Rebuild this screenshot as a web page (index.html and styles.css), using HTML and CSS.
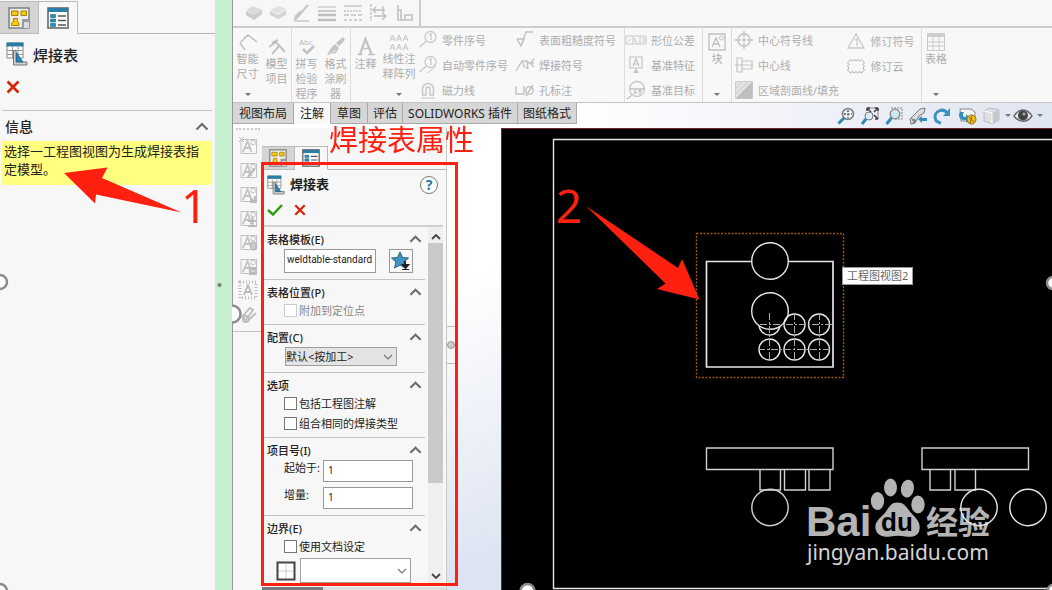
FILE: index.html
```html
<!DOCTYPE html>
<html lang="zh-CN">
<head>
<meta charset="utf-8">
<title>焊接表属性</title>
<link rel="stylesheet" href="styles.css">
</head>
<body>
<svg class="defs" aria-hidden="true">
  <symbol id="i-tree" viewBox="0 0 22 22">
    <rect x="1" y="1" width="20" height="20" fill="#ececec" stroke="#7b7b7b" stroke-width="1.4"/>
    <path d="M3.500 4h6.500v4.500h-6.500z M13 4h5.500v4.500h-5.500z M5.500 11.500h4v3l1.500 1.500v2.500h-7.500v-2.500l2-1.500z" fill="#f6c915" stroke="#a98400"/>
    <path d="M14 12h7v9h-7z" fill="#9b9b9b"/><path d="M16 15h5v6h-5z" fill="#ddd"/>
  </symbol>
  <symbol id="i-props" viewBox="0 0 22 22">
    <rect x="1" y="1" width="20" height="20" fill="#fff" stroke="#686868" stroke-width="1.600"/>
    <path d="M1 1h20v4h-20z" fill="#2b7da5"/>
    <path d="M3.500 7.500h5v3h-5z M3.500 12h5v3h-5z M3.500 16.500h5v3h-5z" fill="#2b8fc0" stroke="#1c5d80" stroke-width=".6"/>
    <path d="M11 9h8M11 13.500h8M11 18h8" stroke="#555" stroke-width="1.400"/>
  </symbol>
  <symbol id="i-weld" viewBox="0 0 22 24">
    <path d="M1 1h16v15h-16z" fill="#fff" stroke="#888"/>
    <path d="M.5 .5h17v4h-17z" fill="#2b7da5"/>
    <path d="M6.500 5v11M12 5v11M1 8.500h16M1 12.500h16" stroke="#999"/>
    <path d="M7.500 8.500h2.500v11.500h11v3h-13.500z" fill="#d0d0d0" stroke="#777"/>
    <path d="M10.500 10.500l6.500 9.500h-6.500z" fill="#2387bd" stroke="#175b80" stroke-width=".7"/>
  </symbol>
  <symbol id="i-x" viewBox="0 0 14 14"><path d="M1.500 1.500l11 11M12.500 1.500l-11 11" stroke="#d8220c" stroke-width="2.600" fill="none"/></symbol>
  <symbol id="i-up" viewBox="0 0 14 8"><path d="M1.500 7l5.500-5.500 5.500 5.500" stroke="#6c6c6c" stroke-width="2.200" fill="none"/></symbol>
  <symbol id="i-down" viewBox="0 0 10 6"><path d="M1 1l4 4 4-4" stroke="#777" stroke-width="1.200" fill="none"/></symbol>
  <symbol id="i-note" viewBox="0 0 20 20"><g fill="none" stroke="#c2c2c2"><path d="M3 3.500h15.500v14h-15.500z"/><circle cx="15" cy="6.500" r="2.400"/><path d="M5 16l4.500-11 4 11M6.500 12h5.500" stroke-width="1.800"/></g></symbol>
  <symbol id="i-balloon" viewBox="0 0 20 20"><g fill="none" stroke="#bdbdbd" stroke-width="1.300"><circle cx="12.500" cy="7" r="5.500"/><path d="M8.500 11l-7 6M11 5l2-1v6"/></g></symbol>
</svg>

<div class="app">
  <aside class="info-panel">
    <div class="ptabs big">
      <button class="ptab" aria-label="特征树"><svg width="22" height="22"><use href="#i-tree"/></svg></button>
      <button class="ptab on" aria-label="属性"><svg width="22" height="22"><use href="#i-props"/></svg></button>
    </div>
    <h1 class="info-title"><svg width="22" height="24"><use href="#i-weld"/></svg>焊接表</h1>
    <button class="info-close" aria-label="取消"><svg width="14" height="14"><use href="#i-x"/></svg></button>
    <section class="info-msg">
      <h2>信息<svg width="14" height="9"><use href="#i-up"/></svg></h2>
      <p>选择一工程图视图为生成焊接表指定模型。</p>
    </section>
  </aside>
  <div class="band"></div>

  <main class="cad">
    <div class="quickbar">
      <div class="quick">
        <svg width="18" height="20" viewBox="0 0 18 20"><path d="M1 7l7-4 9 4-8 5z" fill="#d6d6d6"/><path d="M1 8v4l8 5v-5zM17 7v4l-8 6v-5z" fill="#c2c2c2"/></svg>
        <svg width="18" height="20" viewBox="0 0 18 20"><path d="M1 7l8-4 8 3-8 5z" fill="#ddd"/><path d="M1 8v4l8 4v-4zM17 7v5l-8 4v-4z" fill="#ccc"/></svg>
        <svg width="18" height="20" viewBox="0 0 18 20"><path d="M15 2l-8 9M9 9l-5 6-2 1 1-3 4-4z" stroke="#bbb" stroke-width="2" fill="#bbb"/><path d="M2 18h14" stroke="#bbb" stroke-width="1.500"/></svg>
        <svg width="20" height="20" viewBox="0 0 20 20"><path d="M1 4h18" stroke="#aaa"/><path d="M1 8h18" stroke="#aaa" stroke-width="1.500"/><path d="M1 12h18M1 17h18" stroke="#b0b0b0" stroke-width="2.600"/></svg>
        <svg width="20" height="20" viewBox="0 0 20 20"><g stroke="#b8b8b8" stroke-width="1.400"><path d="M1 3h18"/><path d="M1 8h18" stroke-dasharray="2 1"/><path d="M1 12h18" stroke-dasharray="5 2"/><path d="M1 17h18" stroke-dasharray="3 2"/></g></svg>
        <svg width="20" height="20" viewBox="0 0 20 20"><g stroke="#b0b0b0" stroke-width="1.300" fill="none"><path d="M2 1v17" stroke-dasharray="3 1"/><path d="M4 7h12M7 4l-3 3 3 3M5 13h12M13 10l4 3-4 4M14 3v8"/></g></svg>
        <svg width="20" height="20" viewBox="0 0 20 20"><path d="M3 2v15h14v-5h-7v5M3 7h3v10" stroke="#b5b5b5" stroke-width="1.600" fill="none"/></svg>
      </div>
    </div>

    <nav class="ribbon" aria-label="注解工具">
      <div class="rgroup">
        <button class="rbig drop" disabled><svg width="20" height="18" viewBox="0 0 20 18"><path d="M2 10l8-8 9 7M2 10l5 7M6 5l5-3" stroke="#b5b5b5" stroke-width="1.500" fill="none"/></svg><span>智能<br>尺寸</span><i></i></button>
        <button class="rbig" disabled><svg width="20" height="20" viewBox="0 0 20 20"><path d="M5 7l6-3M2 11l7-5 9 10M5 18l7-8" stroke="#b5b5b5" stroke-width="2" fill="none"/></svg><span>模型<br>项目</span></button>
      </div>
      <div class="rgroup">
        <button class="rbig" disabled><svg width="20" height="20" viewBox="0 0 20 20"><text x="2" y="9" class="abc">Abc</text><path d="M6 13l4 4 7-7" stroke="#b5b5b5" stroke-width="2.600" fill="none"/></svg><span>拼写<br>检验<br>程序</span></button>
        <button class="rbig" disabled><svg width="20" height="20" viewBox="0 0 20 20"><path d="M17 1l2 3-6 6-3-3zM9 8l4 4-3 5-9 2 4-7z" fill="#b8b8b8"/><path d="M10 14l-6 4" stroke="#eee"/></svg><span>格式<br>涂刷<br>器</span></button>
      </div>
      <div class="rgroup wide">
        <button class="rbig" disabled><svg width="20" height="20" viewBox="0 0 20 20"><path d="M4 18l5.500-15 6 15" stroke="#b5b5b5" stroke-width="2.200" fill="none"/><path d="M6 12.500h7M1.500 18.500h5M12 18.500h7" stroke="#b5b5b5" stroke-width="1.400" fill="none"/></svg><span>注释</span></button>
        <button class="rbig pattern drop" disabled><svg width="22" height="18" viewBox="0 0 22 18"><path d="M2 8l2.500-6 2.500 6M8.500 8l2.500-6 2.500 6M15 8l2.500-6 2.500 6M2 17l2.500-6 2.500 6M8.500 17l2.500-6 2.500 6M15 17l2.500-6 2.500 6M3 6h3M9.500 6h3M16 6h3M3 15h3M9.500 15h3M16 15h3" stroke="#b8b8b8" fill="none"/></svg><span>线性注<br>释阵列</span><i></i></button>
        <div class="rlist balloons">
          <button disabled><svg width="20" height="20"><use href="#i-balloon"/></svg>零件序号</button>
          <button disabled><svg width="20" height="20" viewBox="0 0 20 20"><use href="#i-balloon"/><path d="M9 18l7-5 2-4" stroke="#bdbdbd" fill="none"/></svg>自动零件序号</button>
          <button disabled><svg width="20" height="20" viewBox="0 0 20 20"><path d="M4.500 15v-6a5.500 5.500 0 0111 0v6h-3.500v-6a2 2 0 00-4 0v6z" fill="none" stroke="#bdbdbd" stroke-width="1.500"/><path d="M3 18h14" stroke="#bdbdbd"/></svg>磁力线</button>
        </div>
        <div class="rlist">
          <button disabled><svg width="20" height="20" viewBox="0 0 20 20"><path d="M2 9h7l-3 7-4-7M6 16l5-14h7" stroke="#b5b5b5" stroke-width="1.400" fill="none"/></svg>表面粗糙度符号</button>
          <button disabled><svg width="20" height="20" viewBox="0 0 20 20"><path d="M1 16l6-10h5l1 8M7 6l3 7M13 6l-1 8M12 8h7M15 8l4 4M15 8l4-4" stroke="#b5b5b5" stroke-width="1.300" fill="none"/></svg>焊接符号</button>
          <button disabled><svg width="20" height="20" viewBox="0 0 20 20"><path d="M1 6v8h8v-8M18 5l-7 11" stroke="#b5b5b5" stroke-width="1.400" fill="none"/><circle cx="14.500" cy="10.500" r="3.800" fill="none" stroke="#b5b5b5" stroke-width="1.400"/></svg>孔标注</button>
        </div>
      </div>
      <div class="rgroup">
        <div class="rlist">
          <button disabled><svg width="22" height="20" viewBox="0 0 22 20"><path d="M1 6h20v8h-20zM8 6v8M15 6v8M3 11l3-2M10 8v4h3M17 8h2v4h-2" stroke="#bdbdbd" fill="none"/></svg>形位公差</button>
          <button disabled><svg width="22" height="20" viewBox="0 0 22 20"><path d="M5 2h12v11h-12zM11 13v5M8 11l3-7 3 7M9 9h4" stroke="#b5b5b5" stroke-width="1.200" fill="none"/><path d="M8 18h6l-3-4z" fill="#b5b5b5"/></svg>基准特征</button>
          <button disabled><svg width="22" height="20" viewBox="0 0 22 20"><circle cx="12" cy="9" r="7.500" fill="none" stroke="#bdbdbd" stroke-width="1.300"/><path d="M4 9h16M7 15l-5 4M9 14l1-3 2 3M13 11h4M15 11v4" stroke="#b5b5b5" stroke-width="1.300" fill="none"/></svg>基准目标</button>
        </div>
      </div>
      <div class="rgroup">
        <button class="rbig single drop" disabled><svg width="18" height="18" viewBox="0 0 18 18"><path d="M1 1h16v16h-16zM4 14l4-9 4 9M5 11h6" stroke="#b5b5b5" stroke-width="1.400" fill="none"/><circle cx="13.500" cy="5" r="2" fill="none" stroke="#b5b5b5"/></svg><span>块</span><i></i></button>
      </div>
      <div class="rgroup last-lists">
        <div class="rlist centers">
          <button disabled><svg width="20" height="20" viewBox="0 0 20 20"><circle cx="10" cy="10" r="6" fill="none" stroke="#b5b5b5" stroke-width="1.300"/><path d="M10 1v6M10 13v6M1 10h6M13 10h6M8 10h4M10 8v4" stroke="#b5b5b5" stroke-width="1.300"/></svg>中心符号线</button>
          <button disabled><svg width="20" height="20" viewBox="0 0 20 20"><path d="M3 3h5v14h-5zM8 6h10v8h-10M1 10h18" stroke="#b8b8b8" stroke-width="1.200" fill="none"/></svg>中心线</button>
          <button disabled><svg width="20" height="20" viewBox="0 0 20 20"><path d="M1.500 1.500h17v17h-17z" fill="#dedede" stroke="#c4c4c4"/><path d="M18.500 1.500v17h-17z" fill="#b0b0b0"/><path d="M2 8l6-6M2 14l12-12" stroke="#c2c2c2"/></svg>区域剖面线/填充</button>
        </div>
        <div class="rlist">
          <button disabled><svg width="20" height="20" viewBox="0 0 20 20"><path d="M10 3l8 14h-16zM9 9l2-1v7" stroke="#bdbdbd" stroke-width="1.300" fill="none"/></svg>修订符号</button>
          <button disabled><svg width="20" height="20" viewBox="0 0 20 20"><path d="M3 5q2-3 3.500 0q2-3 3.500 0q2-3 3.500 0q2-3 3.500 0q3 2 0 3.500q3 2 0 3.500q3 2 0 3.500q-2 3-3.500 0q-2 3-3.500 0q-2 3-3.500 0q-2 3-3.500 0q-3-2 0-3.500q-3-2 0-3.500q-3-2 0-3.500z" stroke="#999" fill="none"/></svg>修订云</button>
        </div>
      </div>
      <div class="rgroup">
        <button class="rbig single drop" disabled><svg width="18" height="18" viewBox="0 0 18 18"><path d="M.5 .5h17v17h-17zM.5 9h17M.5 13h17M6 4v13M12 4v13" stroke="#bdbdbd" fill="none"/><path d="M0 0h18v4h-18z" fill="#c4c4c4"/></svg><span>表格</span><i></i></button>
      </div>
    </nav>

    <div class="tabrow">
      <div class="tabs" role="tablist">
        <button role="tab">视图布局</button><button role="tab" class="on" aria-selected="true">注解</button><button role="tab">草图</button><button role="tab">评估</button><button role="tab">SOLIDWORKS 插件</button><button role="tab">图纸格式</button>
      </div>
      <div class="viewbar">
        <svg width="18" height="18" viewBox="0 0 18 18"><circle cx="11" cy="7" r="5.500" fill="#eef4f8" stroke="#7c7c7c" stroke-width="1.500"/><path d="M11 3v8M7 7h8" stroke="#555" stroke-dasharray="2 1.500" stroke-width="1.600"/><path d="M7 11l-5.500 5.500" stroke="#3288b4" stroke-width="3"/></svg>
        <svg width="18" height="18" viewBox="0 0 18 18"><path d="M6 1h11v11" fill="none" stroke="#888"/><path d="M6 1l4 4M17 1l-4 4M17 12l-4-4M6 1h3M6 1v3M17 1v3M17 1h-3M17 12h-3" stroke="#444" stroke-width="1.600"/><circle cx="8" cy="9" r="4" fill="#dceef8" stroke="#777"/><path d="M5 12l-4 5" stroke="#3288b4" stroke-width="3"/></svg>
        <svg width="18" height="18" viewBox="0 0 18 18"><path d="M6 1h11v11h-8" fill="none" stroke="#888" stroke-dasharray="2 1"/><circle cx="10" cy="7" r="4.800" fill="#cfe7f3" stroke="#888" stroke-width="1.300"/><path d="M6.500 11l-5 6" stroke="#3288b4" stroke-width="3"/></svg>
        <svg width="18" height="18" viewBox="0 0 18 18"><path d="M1 12l10-10 5-1-1 5-5 3-4 7-4 1z" fill="#ddd" stroke="#777"/><path d="M2 11l6 2-3 4z" fill="#888"/><path d="M9 12l4-3v2h5v3h-5v2z" fill="#2e8bba"/></svg>
        <svg width="18" height="18" viewBox="0 0 18 18"><path d="M8 16c-7-1-8-9-2-12 4-2 7 0 9 3" stroke="#3c91bd" stroke-width="3" fill="none"/><path d="M17 1v8h-7z" fill="#3c91bd"/></svg>
        <svg width="20" height="18" viewBox="0 0 20 18"><path d="M3 2h11l4 3v9h-14z" fill="#f4f4f4" stroke="#888"/><path d="M3 5c-3 5 1 9 6 8v3l4-5-4-4v3c-3 0-4-2-2-5z" fill="#3590bf"/><circle cx="14.500" cy="12.500" r="4.500" fill="#f0bc25" stroke="#936c00"/><path d="M12 10l5 5M15 9l-2 7" stroke="#936c00"/></svg>
        <svg width="17" height="18" viewBox="0 0 17 18"><path d="M1 4l6-3 9 2v10l-7 4-8-3z" fill="#dfdfe3" stroke="#bbb"/><path d="M9 6v11l7-4v-10z" fill="#c5c8ce"/><path d="M1 4l8 2v11" fill="none" stroke="#fff"/></svg>
        <b class="tri cube-menu"></b>
        <svg width="20" height="18" viewBox="0 0 20 18"><path d="M1 9c5-8 13-8 18 0-5 7-13 7-18 0z" fill="#e8e8e8" stroke="#666" stroke-width="1.400"/><circle cx="10" cy="8.500" r="5" fill="#444"/><circle cx="11" cy="7" r="1.500" fill="#aaa"/></svg>
        <b class="tri eye-menu"></b>
      </div>
    </div>

    <div class="work">
      <div class="sidebar">
        <div class="sidetools">
          <svg width="20" height="20" viewBox="0 0 20 20"><use href="#i-note"/><path d="M1 1l5 5M6 1l-5 5" stroke="#bbb"/></svg>
          <svg width="20" height="20" viewBox="0 0 20 20"><use href="#i-note"/><path d="M18 9l-7 8-2 1 1-3 6-7z" fill="#bbb"/></svg>
          <svg width="20" height="20" viewBox="0 0 20 20"><use href="#i-note"/><path d="M12 12l4 4v-4h3v7h-7z" fill="#bbb"/></svg>
          <svg width="20" height="20" viewBox="0 0 20 20"><use href="#i-note"/><path d="M10 13h9M14.500 9v8M10 18h9" stroke="#bbb" stroke-width="2"/></svg>
          <svg width="20" height="20" viewBox="0 0 20 20"><use href="#i-note"/><rect x="13" y="10" width="5" height="8" rx="2" fill="#ccc" stroke="#aaa"/></svg>
          <svg width="20" height="20" viewBox="0 0 20 20"><use href="#i-note"/><path d="M11 11h8v8h-8z" fill="#bbb"/><path d="M13 15h4" stroke="#eee"/></svg>
          <svg width="20" height="20" viewBox="0 0 20 20"><path d="M2 2h16v16h-16z" stroke="#bbb" stroke-width="3" stroke-dasharray="1 2" fill="none"/><path d="M6 15l4-10 4 10M7 12h6" stroke="#bbb" stroke-width="1.800" fill="none"/></svg>
          <svg width="20" height="20" viewBox="0 0 20 20"><g stroke="#bbb" stroke-width="1.800" fill="none"><path d="M4 13l8-9 3 2-7 10zM12 15l6-6"/><circle cx="8" cy="15" r="3"/></g></svg>
        </div>
      </div>

      <div class="prop">
        <div class="ptabs">
          <button class="ptab" aria-label="特征树"><svg width="18" height="18"><use href="#i-tree"/></svg></button>
          <button class="ptab on" aria-label="属性"><svg width="18" height="18"><use href="#i-props"/></svg></button>
        </div>
        <div class="prop-head">
          <svg width="18" height="20"><use href="#i-weld"/></svg><h2>焊接表</h2>
          <button class="help" aria-label="帮助">?</button>
        </div>
        <div class="prop-actions">
          <button aria-label="确定"><svg width="16" height="12" viewBox="0 0 16 12"><path d="M1 6l5 4.500 9-9.500" stroke="#2f9a10" stroke-width="2.400" fill="none"/></svg></button>
          <button aria-label="取消"><svg width="12" height="12"><use href="#i-x"/></svg></button>
        </div>
        <div class="scroller">
          <form class="sections">
            <section>
              <h3>表格模板(E)<svg width="13" height="8"><use href="#i-up"/></svg></h3>
              <div class="row tmpl"><input type="text" class="file" aria-label="表格模板" value="weldtable-standard">
                <button type="button" class="star" aria-label="打开模板"><svg width="20" height="20" viewBox="0 0 20 20"><path d="M9 1l2.500 5.500 6 .5-4.500 4 1.500 6-5.500-3-5.500 3 1.500-6-4.500-4 6-.5z" fill="#3e95c1" stroke="#27627f"/><path d="M14 10v4M12 14h5l-2.500 3z" stroke="#222" stroke-width="2" fill="#222"/><path d="M11 18.500h7" stroke="#222"/></svg></button></div>
            </section>
            <section>
              <h3>表格位置(P)<svg width="13" height="8"><use href="#i-up"/></svg></h3>
              <label class="check off"><input type="checkbox" disabled>附加到定位点</label>
            </section>
            <section>
              <h3>配置(C)<svg width="13" height="8"><use href="#i-up"/></svg></h3>
              <div class="combo config"><select aria-label="配置"><option>默认&lt;按加工&gt;</option></select><svg width="10" height="6"><use href="#i-down"/></svg></div>
            </section>
            <section>
              <h3>选项<svg width="13" height="8"><use href="#i-up"/></svg></h3>
              <label class="check"><input type="checkbox">包括工程图注解</label>
              <label class="check"><input type="checkbox">组合相同的焊接类型</label>
            </section>
            <section>
              <h3>项目号(I)<svg width="13" height="8"><use href="#i-up"/></svg></h3>
              <div class="row num"><label for="start">起始于:</label><input type="text" id="start" value="1"></div>
              <div class="row num"><label for="step">增量:</label><input type="text" id="step" value="1"></div>
            </section>
            <section>
              <h3>边界(E)<svg width="13" height="8"><use href="#i-up"/></svg></h3>
              <label class="check"><input type="checkbox">使用文档设定</label>
              <div class="row border-row"><svg width="20" height="20" viewBox="0 0 20 20"><path d="M1.500 1.500h17v17h-17z" fill="#fff" stroke="#444" stroke-width="2"/><path d="M10 3v14M3 10h14" stroke="#ccc"/></svg>
                <div class="combo line"><select aria-label="边界线宽"><option></option></select><svg width="10" height="6"><use href="#i-down"/></svg></div></div>
            </section>
          </form>
          <div class="scrollbar"><svg width="10" height="6" viewBox="0 0 10 6"><path d="M1 5l4-4 4 4" stroke="#444" stroke-width="1.800" fill="none"/></svg><div class="thumb"></div><svg width="10" height="6" viewBox="0 0 10 6"><path d="M1 1l4 4 4-4" stroke="#444" stroke-width="1.800" fill="none"/></svg></div>
        </div>
        <div class="bottom-edge"></div>
      </div>
      <div class="splitter"><span></span></div>

      <div class="sheet">
        <svg class="drawing" width="100%" height="100%">
          <g transform="translate(-502 -129)" fill="none" stroke="#e6e6e6" stroke-width="1.400">
            <path d="M4000 139.500H553.500V588.500H4000"/>
            <path d="M696.500 233.500h147v144h-147z" stroke="#9a5a10" stroke-dasharray="2 1.500"/>
            <path d="M706.500 261.500h126.500v105.500h-126.500z" stroke-width="1.700"/>
            <circle cx="770" cy="261" r="18.300" fill="#000"/>
            <circle cx="769.500" cy="324.500" r="10.500"/>
            <circle cx="770" cy="311" r="18.300" fill="#000"/>
            <g><circle cx="794.500" cy="324.500" r="10.500"/><circle cx="819" cy="324.500" r="10.500"/><circle cx="769.500" cy="349.500" r="10.500"/><circle cx="794.500" cy="349.500" r="10.500"/><circle cx="819" cy="349.500" r="10.500"/></g>
            <path d="M760 324.500h72M758 349.500h74M769.500 313v48M794.500 313v48M819.500 313v48" stroke="#aaa" stroke-width="1" stroke-dasharray="7 2 2 2"/>
            <g stroke="#d0d0d0">
              <path d="M706.500 448h126.500v21.500h-126.500zM760 469.500v20.500h20.500v-20.500M784.500 469.500v20.500h21v-20.500M809 469.500v20.500h21v-20.500M922 448h106.500v21.500h-106.500zM930 469.500v20.500h20.500v-20.500M955 469.500v20.500h20.500v-20.500"/>
              <circle cx="770" cy="507.500" r="18.200"/>
            </g>
            <g fill="#b4b4b4" stroke="none">
              <text x="806" y="536" class="bai">Bai</text>
              <ellipse cx="877.500" cy="501" rx="6.700" ry="9"/><ellipse cx="890.500" cy="487.500" rx="6.500" ry="9"/><ellipse cx="907.500" cy="488.500" rx="6.500" ry="9" transform="rotate(10 907 488)"/><ellipse cx="918" cy="504.500" rx="6.700" ry="9"/>
              <path d="M897.500 502.500c8 0 10 7 15 12s8 9 7 15c-1 7-8 8-14 7-5-1-10-1-15 0-7 1-14-1-15-8-1-6 3-9 8-14s6-12 14-12z"/>
              <text x="881" y="531" class="du">du</text>
              <text x="926" y="534" class="jy">经验</text>
              <text x="807" y="560" class="url">jingyan.baidu.com</text>
            </g>
            <circle cx="979" cy="507.500" r="18.200"/><circle cx="1028" cy="507.500" r="18.200"/>
          </g>
        </svg>
        <div class="tip">工程图视图2</div>
      </div>
    </div>
  </main>
</div>

<svg class="notes" width="100%" height="100%">
  <g fill="#fff" stroke="#8c8c8c" stroke-width="2.500">
    <circle cx="0" cy="282" r="7"/><circle cx="0" cy="591" r="7"/><path d="M232 305.500a8.500 8.500 0 010 17"/><circle cx="527.500" cy="591" r="7"/><circle cx="1053" cy="283" r="6"/><circle cx="1053" cy="590" r="5"/>
  </g>
  <circle cx="219.500" cy="285" r="2" fill="#777"/>
  <path d="M262.500 163.500h194v421h-194z" fill="none" stroke="#ff2010" stroke-width="3"/>
  <path d="M64 173l43.500-5.500-5.500 10.500 79.500 34.500-85.500-18-1 9z" fill="#ff2010"/>
  <path d="M586 206l92 62 4-9 17.500 40.500-42.500-10.500 8.500-5.500z" fill="#ff2010"/>
  <text x="329" y="151" class="red-label">焊接表属性</text>
  <text x="181" y="223" class="red-num">1</text>
  <text x="556" y="223" class="red-num">2</text>
</svg>
</body>
</html>
```
FILE: styles.css
```css
* { box-sizing: border-box; }
body {
  margin: 0;
  font-family: "Noto Sans", "Noto Sans CJK SC", sans-serif;
  font-size: 11px;
  color: #222;
  background: #f7f7f7;
  overflow: hidden;
}
h1, h2, h3, p { margin: 0; }
button, input, select { font: inherit; color: inherit; padding: 0; margin: 0; border: 0; background: none; border-radius: 0; }
svg { display: block; flex: none; }
.defs { position: absolute; width: 0; height: 0; }
.app { display: flex; height: 100vh; }

/* left message panel */
.info-panel { width: 215px; flex: none; background: #f7f7f7; }
.ptabs { display: flex; height: 24px; border-bottom: 1px solid #b5b5b5; }
.ptab { display: grid; place-items: center; width: 33px; height: 24px; background: #d4d4d4; border: 1px solid #bbb; border-left: 0; overflow: hidden; }
.ptab.on { background: #f7f7f7; border-bottom-color: #f7f7f7; }
.ptabs.big { height: 34px; padding-top: 1px; }
.big .ptab { width: 39px; height: 33px; }
.info-title { display: flex; align-items: center; gap: 5px; height: 40px; padding-left: 6px; font-size: 15px; font-weight: 500; }
.info-close { display: block; padding: 6px; height: 26px; }
.info-msg { margin: 10px 3px 0 2px; border-top: 1px solid #c4c4c4; }
.info-msg h2 { display: flex; align-items: center; justify-content: space-between; height: 30px; padding: 0 3px; font-size: 14px; font-weight: 500; }
.info-msg p { min-height: 44px; padding: 1px 2px; background: #ffff80; font-size: 13px; line-height: 18px; }
.band { width: 17px; flex: none; background: #c6efce; }

/* main window */
.cad { flex: 1; min-width: 0; display: flex; flex-direction: column; border-left: 1px solid #999; background: linear-gradient(160deg, #fff 40%, #dce3f1 75%); }
.quickbar { height: 28px; flex: none; background: #f7f7f7; border-bottom: 2px solid #cdcdcd; }
.quick { display: flex; align-items: center; gap: 6px; width: 188px; height: 26px; padding-left: 12px; border-right: 2px solid #ccc; }
.quick svg, .ribbon svg { opacity: .8; }
.ribbon { display: flex; flex: none; height: 75px; background: #f8f8f8; border-bottom: 1px solid #c4c4c4; overflow: hidden; }
.rgroup { display: flex; border-right: 1px solid #ddd; color: #adadad; }
.rgroup:last-child { border: 0; }
.rbig { display: flex; flex-direction: column; align-items: center; width: 29px; padding-top: 8px; line-height: 15px; }
.rbig.drop { padding-top: 5px; position: relative; }
.rbig.pattern { width: 38px; }
.rbig.single { width: 28px; }
.rbig i { position: absolute; bottom: 6px; border: 3px solid transparent; border-top-color: #777; border-bottom: 0; }
.abc { font: 8px "Open Sans", sans-serif; fill: #aaa; }
.rlist { display: flex; flex-direction: column; width: 97px; }
.rlist button { display: flex; align-items: center; gap: 4px; height: 25px; white-space: nowrap; }
.rgroup .rlist:only-child { width: 77px; }
.centers { width: 113px; }
.last-lists { width: 190px; padding-left: 2px; }
.last-lists .rlist:last-child { width: 75px; }
.wide { width: 274px; }

.tabrow { display: flex; justify-content: space-between; height: 25px; flex: none; background: linear-gradient(90deg, #fff 40%, #e0e5f2); }
.tabs { display: flex; height: 21px; }
.tabs button { height: 21px; padding: 0 6px; font-size: 12px; background: #d6d6d6; border-right: 1px solid #aaa; border-bottom: 1px solid #aaa; white-space: nowrap; }
.tabs button:nth-child(n+4) { padding: 0 5px; }
.tabs .on { background: #f8f8f8; border-bottom-color: #f8f8f8; }
.viewbar { display: flex; align-items: center; gap: 6px; padding-right: 9px; }
.tri { border: 3px solid transparent; border-top-color: #777; border-bottom: 0; }
.cube-menu { margin: 0 -4px 0 -1px; }
.eye-menu { margin-left: -2px; }

.work { display: flex; flex: 1; min-height: 0; }
.sidebar { width: 29px; flex: none; background: #f7f7f7; }
.sidetools { display: flex; flex-direction: column; align-items: center; gap: 4px; padding: 8px 0 7px; border-bottom: 1px solid #c4c4c4; }
.sidetools::before { content: ""; width: 24px; border-top: 2px dotted #ccc; margin: -8px 0 2px; }

/* property manager */
.prop { display: flex; flex-direction: column; width: 185px; flex: none; padding-top: 18px; background: #f7f7f7; border-right: 1px solid #c8c8c8; }
.prop-head { display: flex; align-items: center; gap: 5px; height: 30px; padding: 0 8px 0 5px; }
.prop-head h2 { flex: 1; font-size: 13px; font-weight: 700; line-height: 16px; padding-bottom: 2px; }
.help { width: 18px; height: 18px; border: 1px solid #777; border-radius: 50%; background: #fff; color: #2378a5; font-size: 14px; font-weight: 700; line-height: 16px; }
.prop-actions { display: flex; align-items: center; gap: 11px; height: 20px; padding-left: 5px; }
.scroller { display: flex; flex: 1; min-height: 0; margin: 5px 3px 2px 2px; border-top: 2px solid #d0d0d0; overflow: hidden; }
.sections { width: 161px; flex: none; }
.sections section { padding: 2px 0 6px; border-bottom: 1px solid #c4c4c4; }
.sections section:last-child { border: 0; }
.sections h3 { display: flex; align-items: center; justify-content: space-between; height: 20px; padding: 0 3px; font-size: 11px; font-weight: 500; }
.row { display: flex; }
.row input { border: 1px solid #999; background: #fff; }
.tmpl { padding-left: 20px; gap: 13px; }
.file { width: 92px; height: 24px; padding: 0 2px 3px; font-family: Roboto, sans-serif; font-size: 10px; }
.star { display: grid; place-items: center; width: 24px; height: 24px; border: 1px solid #999; }
.check { display: flex; align-items: center; gap: 2px; height: 16px; padding-left: 20px; white-space: nowrap; }
.check + .check, .check + .row { margin-top: 4px; }
.check input { appearance: none; width: 13px; height: 13px; border: 1px solid #777; background: #fff; }
.off { color: #888; }
.off input { border-color: #ccc; }
.combo { display: grid; align-items: center; }
.combo select, .combo svg { grid-area: 1 / 1; }
.combo svg { justify-self: end; margin-right: 4px; pointer-events: none; }
.combo select { appearance: none; width: 100%; height: 100%; border: 1px solid #a0a0a0; background: #e4e4e4; padding: 0; }
.config { width: 112px; height: 19px; margin-left: 21px; }
.line { width: 111px; height: 25px; }
.line select { background: #fff; }
.num { padding-left: 20px; }
.num label { width: 39px; line-height: 16px; }
.num input { width: 90px; height: 22px; padding: 0 4px 2px; font-size: 10px; }
.num + .num { margin-top: 5px; }
.border-row { align-items: center; gap: 4px; padding-left: 12px; }
.scrollbar { display: flex; flex-direction: column; align-items: center; width: 15px; margin-left: 3px; padding: 7px 0 6px; background: #efefef; }
.thumb { width: 15px; height: 240px; margin: 3px 0 auto; background: #c9c9c9; }
.bottom-edge { height: 3px; flex: none; background: linear-gradient(90deg, #77777f 61px, #ddd 61px); }
.splitter { display: flex; align-items: center; width: 10px; flex: none; }
.splitter span { width: 9px; height: 38px; margin-bottom: 28px; background: #f7f7f7; border: 1px solid #bbb; border-left: 0; display: grid; place-items: center; }
.splitter span::before { content: ""; width: 6px; height: 6px; border-radius: 50%; background: #ccc; border: 1px solid #999; }

/* drawing sheet */
.sheet { position: relative; flex: 1; min-width: 0; margin-left: 44px; background: #000; border: 1px solid #7a2028; border-width: 1px 0 0 1px; overflow: hidden; }
.tip { position: absolute; left: 340px; top: 138px; height: 18px; padding: 0 4px; background: #fff; border: 1px solid #999; color: #666; font-size: 11px; line-height: 16px; white-space: nowrap; }
.bai { font: 700 42px "Liberation Sans", sans-serif; }
.du { font: 700 26px "Liberation Sans", sans-serif; fill: #000; }
.jy { font: 700 32px "Noto Sans CJK SC", sans-serif; }
.url { font: 21px "Noto Sans", sans-serif; fill: #d4d4d4; }

.notes { position: fixed; inset: 0; pointer-events: none; }
.red-label { font: 29px "Noto Sans CJK SC", sans-serif; fill: #ff2010; }
.red-num { font: 46px "Noto Sans", sans-serif; fill: #ff2010; }
```
